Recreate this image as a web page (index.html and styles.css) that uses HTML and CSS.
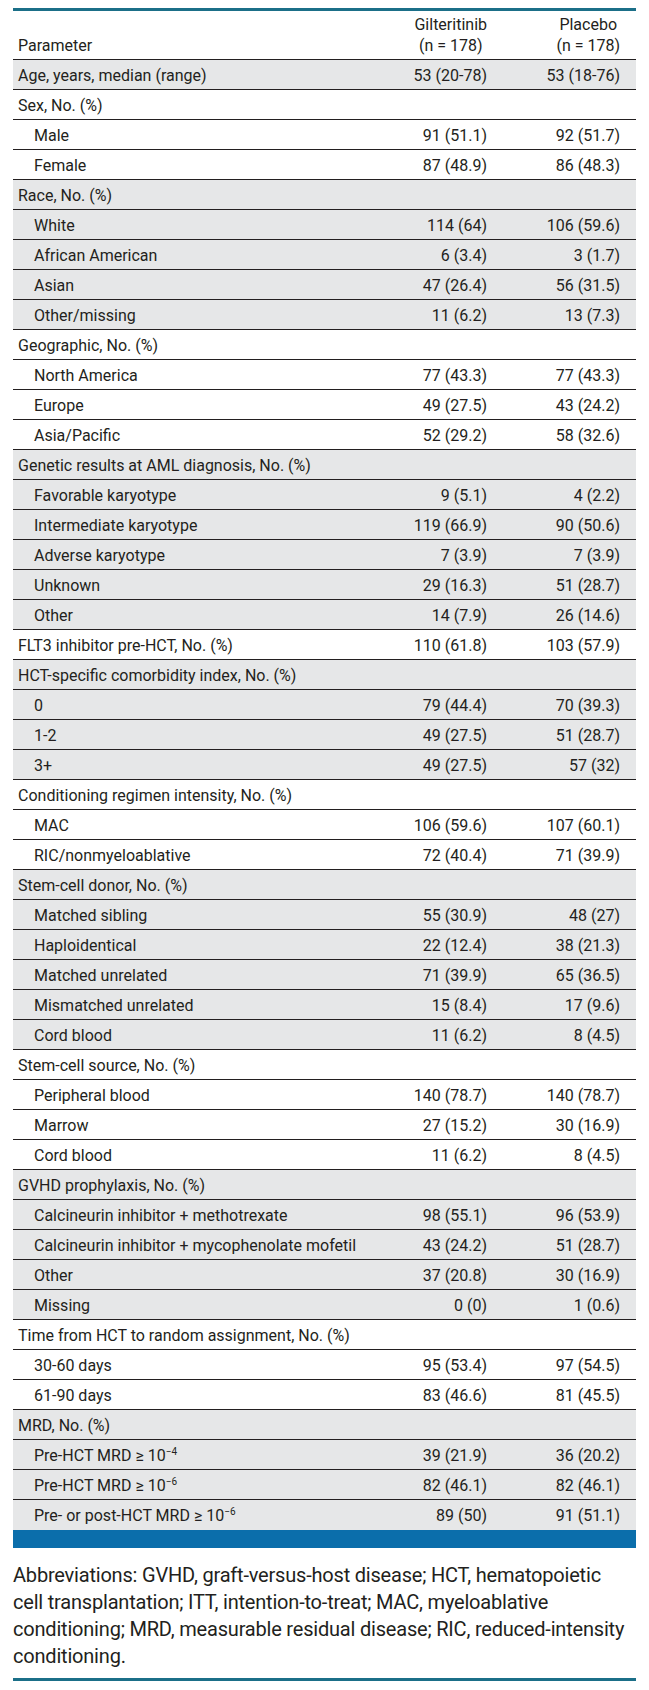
FILE: index.html
```html
<!DOCTYPE html>
<html lang="en">
<head>
<meta charset="utf-8">
<title>Baseline characteristics</title>
<link rel="stylesheet" href="styles.css">
</head>
<body>
<div class="wrap">
<table class="tbl">
<colgroup><col class="c1"><col class="c2"><col class="c3"></colgroup>
<thead>
<tr>
<th class="param">Parameter</th>
<th class="num"><span class="hd">Gilteritinib<br>(n = 178)</span></th>
<th class="num last"><span class="hd">Placebo<br>(n = 178)</span></th>
</tr>
</thead>
<tbody class="shade">
<tr><td>Age, years, median (range)</td><td class="num">53 (20-78)</td><td class="num last">53 (18-76)</td></tr>
</tbody>
<tbody>
<tr><td>Sex, No. (%)</td><td class="num"></td><td class="num last"></td></tr>
<tr><td class="sub">Male</td><td class="num">91 (51.1)</td><td class="num last">92 (51.7)</td></tr>
<tr><td class="sub">Female</td><td class="num">87 (48.9)</td><td class="num last">86 (48.3)</td></tr>
</tbody>
<tbody class="shade">
<tr><td>Race, No. (%)</td><td class="num"></td><td class="num last"></td></tr>
<tr><td class="sub">White</td><td class="num">114 (64)</td><td class="num last">106 (59.6)</td></tr>
<tr><td class="sub">African American</td><td class="num">6 (3.4)</td><td class="num last">3 (1.7)</td></tr>
<tr><td class="sub">Asian</td><td class="num">47 (26.4)</td><td class="num last">56 (31.5)</td></tr>
<tr><td class="sub">Other/missing</td><td class="num">11 (6.2)</td><td class="num last">13 (7.3)</td></tr>
</tbody>
<tbody>
<tr><td>Geographic, No. (%)</td><td class="num"></td><td class="num last"></td></tr>
<tr><td class="sub">North America</td><td class="num">77 (43.3)</td><td class="num last">77 (43.3)</td></tr>
<tr><td class="sub">Europe</td><td class="num">49 (27.5)</td><td class="num last">43 (24.2)</td></tr>
<tr><td class="sub">Asia/Pacific</td><td class="num">52 (29.2)</td><td class="num last">58 (32.6)</td></tr>
</tbody>
<tbody class="shade">
<tr><td>Genetic results at AML diagnosis, No. (%)</td><td class="num"></td><td class="num last"></td></tr>
<tr><td class="sub">Favorable karyotype</td><td class="num">9 (5.1)</td><td class="num last">4 (2.2)</td></tr>
<tr><td class="sub">Intermediate karyotype</td><td class="num">119 (66.9)</td><td class="num last">90 (50.6)</td></tr>
<tr><td class="sub">Adverse karyotype</td><td class="num">7 (3.9)</td><td class="num last">7 (3.9)</td></tr>
<tr><td class="sub">Unknown</td><td class="num">29 (16.3)</td><td class="num last">51 (28.7)</td></tr>
<tr><td class="sub">Other</td><td class="num">14 (7.9)</td><td class="num last">26 (14.6)</td></tr>
</tbody>
<tbody>
<tr><td>FLT3 inhibitor pre-HCT, No. (%)</td><td class="num">110 (61.8)</td><td class="num last">103 (57.9)</td></tr>
</tbody>
<tbody class="shade">
<tr><td>HCT-specific comorbidity index, No. (%)</td><td class="num"></td><td class="num last"></td></tr>
<tr><td class="sub">0</td><td class="num">79 (44.4)</td><td class="num last">70 (39.3)</td></tr>
<tr><td class="sub">1-2</td><td class="num">49 (27.5)</td><td class="num last">51 (28.7)</td></tr>
<tr><td class="sub">3+</td><td class="num">49 (27.5)</td><td class="num last">57 (32)</td></tr>
</tbody>
<tbody>
<tr><td>Conditioning regimen intensity, No. (%)</td><td class="num"></td><td class="num last"></td></tr>
<tr><td class="sub">MAC</td><td class="num">106 (59.6)</td><td class="num last">107 (60.1)</td></tr>
<tr><td class="sub">RIC/nonmyeloablative</td><td class="num">72 (40.4)</td><td class="num last">71 (39.9)</td></tr>
</tbody>
<tbody class="shade">
<tr><td>Stem-cell donor, No. (%)</td><td class="num"></td><td class="num last"></td></tr>
<tr><td class="sub">Matched sibling</td><td class="num">55 (30.9)</td><td class="num last">48 (27)</td></tr>
<tr><td class="sub">Haploidentical</td><td class="num">22 (12.4)</td><td class="num last">38 (21.3)</td></tr>
<tr><td class="sub">Matched unrelated</td><td class="num">71 (39.9)</td><td class="num last">65 (36.5)</td></tr>
<tr><td class="sub">Mismatched unrelated</td><td class="num">15 (8.4)</td><td class="num last">17 (9.6)</td></tr>
<tr><td class="sub">Cord blood</td><td class="num">11 (6.2)</td><td class="num last">8 (4.5)</td></tr>
</tbody>
<tbody>
<tr><td>Stem-cell source, No. (%)</td><td class="num"></td><td class="num last"></td></tr>
<tr><td class="sub">Peripheral blood</td><td class="num">140 (78.7)</td><td class="num last">140 (78.7)</td></tr>
<tr><td class="sub">Marrow</td><td class="num">27 (15.2)</td><td class="num last">30 (16.9)</td></tr>
<tr><td class="sub">Cord blood</td><td class="num">11 (6.2)</td><td class="num last">8 (4.5)</td></tr>
</tbody>
<tbody class="shade">
<tr><td>GVHD prophylaxis, No. (%)</td><td class="num"></td><td class="num last"></td></tr>
<tr><td class="sub">Calcineurin inhibitor + methotrexate</td><td class="num">98 (55.1)</td><td class="num last">96 (53.9)</td></tr>
<tr><td class="sub">Calcineurin inhibitor + mycophenolate mofetil</td><td class="num">43 (24.2)</td><td class="num last">51 (28.7)</td></tr>
<tr><td class="sub">Other</td><td class="num">37 (20.8)</td><td class="num last">30 (16.9)</td></tr>
<tr><td class="sub">Missing</td><td class="num">0 (0)</td><td class="num last">1 (0.6)</td></tr>
</tbody>
<tbody>
<tr><td>Time from HCT to random assignment, No. (%)</td><td class="num"></td><td class="num last"></td></tr>
<tr><td class="sub">30-60 days</td><td class="num">95 (53.4)</td><td class="num last">97 (54.5)</td></tr>
<tr><td class="sub">61-90 days</td><td class="num">83 (46.6)</td><td class="num last">81 (45.5)</td></tr>
</tbody>
<tbody class="shade final">
<tr><td>MRD, No. (%)</td><td class="num"></td><td class="num last"></td></tr>
<tr><td class="sub">Pre-HCT MRD ≥ 10<sup>−4</sup></td><td class="num">39 (21.9)</td><td class="num last">36 (20.2)</td></tr>
<tr><td class="sub">Pre-HCT MRD ≥ 10<sup>−6</sup></td><td class="num">82 (46.1)</td><td class="num last">82 (46.1)</td></tr>
<tr><td class="sub">Pre- or post-HCT MRD ≥ 10<sup>−6</sup></td><td class="num">89 (50)</td><td class="num last">91 (51.1)</td></tr>
</tbody>
</table>
<div class="bar"></div>
<p class="note">Abbreviations: GVHD, graft-versus-host disease; HCT, hematopoietic<br>cell transplantation; ITT, intention-to-treat; MAC, myeloablative<br>conditioning; MRD, measurable residual disease; RIC, <span class="nb">reduced-intensity</span><br>conditioning.</p>
<div class="rule"></div>
</div>
</body>
</html>
```
FILE: styles.css
```css
html, body {
  margin: 0;
  padding: 0;
  background: #ffffff;
}
body {
  font-family: Roboto, "Liberation Sans", Arial, sans-serif;
  color: #231f20;
}
.wrap {
  width: 623px;
  margin: 0 13px;
  padding-top: 8px;
}
.tbl {
  width: 623px;
  table-layout: fixed;
  border-collapse: separate;
  border-spacing: 0;
  border-top: 3px solid #1b6f88;
  font-size: 16px;
}
.c1 { width: 334px; }
.c2 { width: 140px; }
.c3 { width: 149px; }
.tbl th,
.tbl td {
  padding: 2px 5px 0;
  line-height: 27px;
  border-bottom: 1px solid #231f20;
  text-align: left;
  font-weight: normal;
  white-space: nowrap;
  vertical-align: top;
}
.tbl thead th {
  line-height: 21px;
  padding-top: 3px;
  padding-bottom: 3px;
  vertical-align: bottom;
}
.tbl .num {
  text-align: right;
  padding-right: 0;
}
.tbl .num.last {
  padding-right: 16px;
}
.hd {
  display: inline-block;
  text-align: center;
}
.tbl td.sub {
  padding-left: 21px;
}
.shade td {
  background: #e6e7e8;
}
.final tr:last-child td {
  border-bottom: 0;
  padding-bottom: 1px;
}
sup {
  font-size: 10px;
  line-height: 0;
  vertical-align: 6px;
}
.bar {
  height: 18px;
  background: #0b6eab;
}
.note {
  margin: 14px 0 0;
  font-size: 20px;
  line-height: 27px;
  letter-spacing: -0.2px;
  white-space: nowrap;
}
.nb {
  white-space: nowrap;
}
.rule {
  margin-top: 8px;
  height: 3px;
  background: #1b6f88;
}
```
